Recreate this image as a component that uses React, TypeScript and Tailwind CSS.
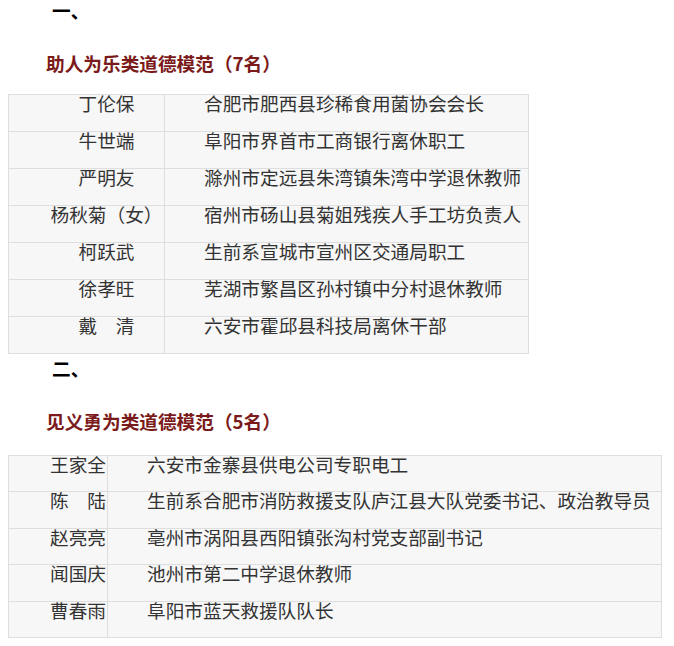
import React from 'react';

const groupOne = [
  ['丁伦保', '合肥市肥西县珍稀食用菌协会会长'],
  ['牛世端', '阜阳市界首市工商银行离休职工'],
  ['严明友', '滁州市定远县朱湾镇朱湾中学退休教师'],
  ['杨秋菊（女）', '宿州市砀山县菊姐残疾人手工坊负责人'],
  ['柯跃武', '生前系宣城市宣州区交通局职工'],
  ['徐孝旺', '芜湖市繁昌区孙村镇中分村退休教师'],
  ['戴　清', '六安市霍邱县科技局离休干部'],
];

const groupTwo = [
  ['王家全', '六安市金寨县供电公司专职电工'],
  ['陈　陆', '生前系合肥市消防救援支队庐江县大队党委书记、政治教导员'],
  ['赵亮亮', '亳州市涡阳县西阳镇张沟村党支部副书记'],
  ['闻国庆', '池州市第二中学退休教师'],
  ['曹春雨', '阜阳市蓝天救援队队长'],
];

function Table({ rows, width, nameCol, rowH }: { rows: string[][]; width: string; nameCol: string; rowH: string }) {
  return (
    <table className={`${width} ml-[8px] border-collapse bg-[#f7f7f7] text-[18.67px] leading-[16px] text-[#333]`}>
      <tbody>
        {rows.map(([name, desc]) => (
          <tr key={name} className={rowH}>
            <td className={`${nameCol} border border-[#dedede] pl-[40px] pr-0 pt-0 align-top text-center whitespace-nowrap`}>
              {name}
            </td>
            <td className="border border-[#dedede] pl-[39px] pt-0 align-top whitespace-nowrap">{desc}</td>
          </tr>
        ))}
      </tbody>
    </table>
  );
}

export default function App() {
  return (
    <div
      className="w-[674px] h-[646px] bg-white overflow-hidden"
      style={{ fontFamily: '"Noto Sans CJK SC", "Noto Sans", sans-serif' }}
    >
      <div className="pl-[52px] pt-[2px] text-[18.67px] leading-[16px] font-bold text-black">一、</div>
      <div className="mt-[33.5px] pl-[46px] text-[18.67px] leading-[22px] font-bold text-[#7b1a1a]">
        助人为乐类道德模范（7名）
      </div>
      <div className="mt-[20.5px]">
        <Table rows={groupOne} width="w-[521px]" nameCol="w-[156px]" rowH="h-[37px]" />
      </div>
      <div className="mt-[6px] pl-[52px] text-[18.67px] leading-[16px] font-bold text-black">二、</div>
      <div className="mt-[33.5px] pl-[46px] text-[18.67px] leading-[22px] font-bold text-[#7b1a1a]">
        见义勇为类道德模范（5名）
      </div>
      <div className="mt-[23px]">
        <Table rows={groupTwo} width="w-[654px]" nameCol="w-[99px]" rowH="h-[36.6px]" />
      </div>
    </div>
  );
}
